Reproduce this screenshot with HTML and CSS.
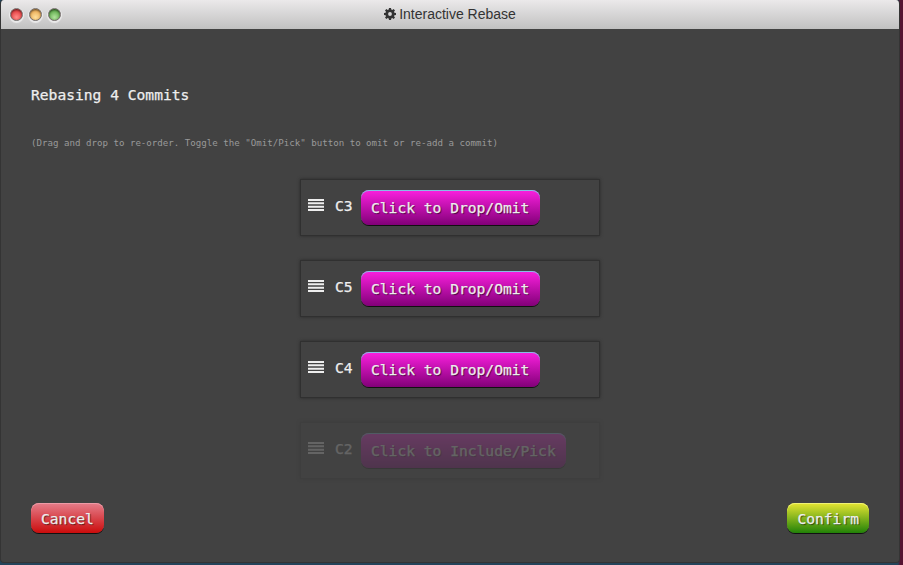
FILE: index.html
```html
<!DOCTYPE html>
<html lang="en">
<head>
<meta charset="utf-8">
<title>Interactive Rebase</title>
<link rel="stylesheet" href="styles.css">
</head>
<body>
<main class="window">
  <header class="titlebar">
    <div class="lights"><i class="light close"></i><i class="light minimize"></i><i class="light maximize"></i></div>
    <div class="title">
      <svg width="12" height="12" viewBox="0 0 12 12"><path fill="#333" fill-rule="evenodd" d="M5 0h2l.3 1.600 1 .4L9.600 1 11 2.400l-1 1.300.4 1L12 5v2l-1.600.3-.4 1L11 9.600 9.600 11l-1.300-1-1 .4L7 12H5l-.3-1.600-1-.4L2.400 11 1 9.600l1-1.300-.4-1L0 7V5l1.600-.3.4-1L1 2.400 2.400 1l1.300 1 1-.4zM6 4.100a1.900 1.900 0 1 0 0 3.800 1.900 1.900 0 0 0 0-3.800z"/></svg>
      <span>Interactive Rebase</span>
    </div>
  </header>
  <section class="content">
    <h1>Rebasing 4 Commits</h1>
    <p class="hint">(Drag and drop to re-order. Toggle the "Omit/Pick" button to omit or re-add a commit)</p>
    <ul class="commits">
      <li class="commit"><svg class="handle" width="16" height="13" viewBox="0 0 16 13"><path d="M0 0h16v2H0zM0 3.300h16v2H0zM0 6.700h16v2H0zM0 10h16v2H0z"/></svg><span class="name">C3</span><button class="button toggle">Click to Drop/Omit</button></li>
      <li class="commit"><svg class="handle" width="16" height="13" viewBox="0 0 16 13"><path d="M0 0h16v2H0zM0 3.300h16v2H0zM0 6.700h16v2H0zM0 10h16v2H0z"/></svg><span class="name">C5</span><button class="button toggle">Click to Drop/Omit</button></li>
      <li class="commit"><svg class="handle" width="16" height="13" viewBox="0 0 16 13"><path d="M0 0h16v2H0zM0 3.300h16v2H0zM0 6.700h16v2H0zM0 10h16v2H0z"/></svg><span class="name">C4</span><button class="button toggle">Click to Drop/Omit</button></li>
      <li class="commit omitted"><svg class="handle" width="16" height="13" viewBox="0 0 16 13"><path d="M0 0h16v2H0zM0 3.300h16v2H0zM0 6.700h16v2H0zM0 10h16v2H0z"/></svg><span class="name">C2</span><button class="button toggle">Click to Include/Pick</button></li>
    </ul>
    <footer class="actions">
      <button class="button cancel">Cancel</button>
      <button class="button confirm">Confirm</button>
    </footer>
  </section>
</main>
</body>
</html>
```
FILE: styles.css
```css
* { box-sizing: border-box; }
body {
  margin: 0;
  height: 565px;
  overflow: hidden;
  background: linear-gradient(to right, #24445a 0 898px, #561331 900px);
  font: 14.62px/18px "DejaVu Sans Mono", monospace;
  color: #eee;
  -webkit-text-stroke: .25px;
}
.window {
  width: 900px;
  height: 563px;
  background: #424242;
  border: 1px solid #343434;
  border-top: 0;
  border-radius: 4px;
  overflow: hidden;
}
.titlebar {
  height: 29px;
  margin: 0 -1px;
  display: grid;
  grid-template-columns: 1fr auto 1fr;
  align-items: center;
  background: linear-gradient(#ebe9ea, #c1c1c1);
  border-left: 1px solid #4d82ad;
  border-right: 1px solid #7890a5;
}
.lights { display: flex; gap: 6px; padding-left: 9px; }
.light {
  width: 13px;
  height: 13px;
  border-radius: 50%;
  border: 1px solid #77706e;
  box-shadow: 0 1px 1px 1px #fff9, inset 0 1px 2px #0008;
}
.close { background: radial-gradient(circle at 50% 75%, #ff8b87, #e8484a 60%, #b73437); }
.minimize { background: radial-gradient(circle at 50% 75%, #ffe09c, #eeb360 60%, #b68443); }
.maximize { background: radial-gradient(circle at 50% 75%, #b0e29c, #6bb457 60%, #427d35); }
.title {
  display: flex;
  align-items: center;
  gap: 3px;
  font: 14px/18px "Liberation Sans", Arial, sans-serif;
  color: #333;
  padding-bottom: 1px;
  -webkit-text-stroke: 0;
}
.content { padding: 0 30px; }
h1 { margin: 57px 0 0; font: inherit; }
.hint { margin: 33px 0 0; font-size: 9.13px; line-height: 12px; color: #999; -webkit-text-stroke: 0; }
.commits { list-style: none; margin: 30px auto 0; padding: 0; width: 300px; }
.commit {
  height: 57px;
  margin: 0 0 24px;
  display: flex;
  align-items: center;
  padding: 0 7px;
  border: 1px solid #303030;
  box-shadow: 0 0 3px #2b2b2b;
}
.omitted { opacity: .2; }
.handle { fill: #eee; margin-bottom: 4px; }
.name { width: 26px; margin: 0 0 3px 11px; }
.button {
  height: 30px;
  padding: 2px 10px 0;
  border: 0;
  border-radius: 8px;
  font: inherit;
  color: #eee;
  text-shadow: 1px 1px 1px #0009;
  white-space: nowrap;
}
.toggle {
  height: 35px;
  padding-right: 10.5px;
  margin-bottom: 1px;
  background: linear-gradient(#fb20df, #820078);
  box-shadow: inset 0 1px #87bee5, 0 1px #111;
}
.actions { display: flex; justify-content: space-between; }
.cancel { background: linear-gradient(#e57e8b, #cb0c0c); box-shadow: inset 0 1px #ee9aa5, 0 1px #111; }
.confirm { background: linear-gradient(#e6e532, #218208); box-shadow: inset 0 1px #eff276, 0 1px #111; }
```
